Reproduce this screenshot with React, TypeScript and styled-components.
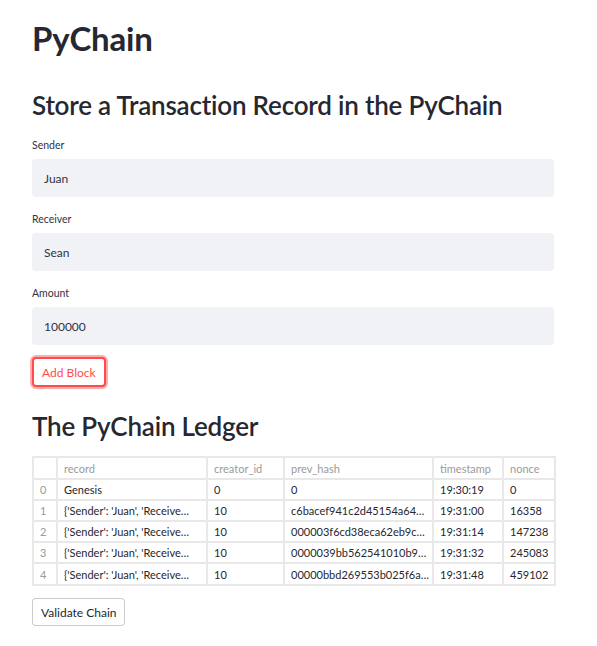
import React from 'react';
import styled, { createGlobalStyle } from 'styled-components';

const GlobalStyle = createGlobalStyle`
  body {
    margin: 0;
    background: #ffffff;
    font-family: Lato, "Liberation Sans", sans-serif;
    color: #262730;
  }
`;

const Page = styled.div`
  width: 522px;
  padding: 18px 0 20px 32px;
`;

const Title = styled.h1`
  margin: 0;
  font-size: 33px;
  line-height: 40px;
  font-weight: 700;
  letter-spacing: -0.2px;
`;

const Heading = styled.h2<{ $top: number }>`
  margin: ${(p) => p.$top}px 0 0;
  font-size: 26px;
  line-height: 32px;
  font-weight: 600;
  letter-spacing: -0.2px;
`;

const Field = styled.div<{ $top: number }>`
  display: flex;
  flex-direction: column;
  gap: 7px;
  margin-top: ${(p) => p.$top}px;
`;

const Label = styled.label`
  font-size: 10.5px;
  line-height: 14px;
  color: #31333f;
`;

const Input = styled.input`
  box-sizing: border-box;
  height: 38px;
  width: 100%;
  border: none;
  border-radius: 4px;
  background: #f0f2f6;
  padding: 0 12px;
  font-family: inherit;
  font-size: 12px;
  color: #31333f;
  outline: none;
`;

const Button = styled.button<{ $active?: boolean; $top: number }>`
  display: block;
  box-sizing: border-box;
  margin-top: ${(p) => p.$top}px;
  height: ${(p) => (p.$active ? 30 : 28)}px;
  padding: 0 8px;
  border-radius: 4px;
  background: #ffffff;
  font-family: inherit;
  font-size: 12px;
  border: ${(p) => (p.$active ? '2px solid #ff4b4b' : '1px solid rgba(49, 51, 63, 0.25)')};
  color: ${(p) => (p.$active ? '#ff4b4b' : '#262730')};
  box-shadow: ${(p) => (p.$active ? '0 0 0 2px rgba(255, 75, 75, 0.45)' : 'none')};
`;

const Table = styled.div`
  margin-top: 14px;
  width: 520px;
  display: grid;
  grid-template-columns: 22px 148px 75px 147px 68px 50px;
  grid-template-rows: 20px repeat(4, 19px) 20px;
  gap: 2px;
  padding: 2px;
  background: #e8e8e8;
`;

const Cell = styled.div<{ $muted?: boolean }>`
  display: flex;
  align-items: center;
  background: #ffffff;
  padding: 0 6px;
  font-size: 11px;
  white-space: nowrap;
  overflow: hidden;
  color: ${(p) => (p.$muted ? '#9a9a9a' : '#262730')};
`;

const columns = ['', 'record', 'creator_id', 'prev_hash', 'timestamp', 'nonce'];

const rows = [
  ['0', 'Genesis', '0', '0', '19:30:19', '0'],
  ['1', "{'Sender': 'Juan', 'Receive…", '10', 'c6bacef941c2d45154a64…', '19:31:00', '16358'],
  ['2', "{'Sender': 'Juan', 'Receive…", '10', '000003f6cd38eca62eb9c…', '19:31:14', '147238'],
  ['3', "{'Sender': 'Juan', 'Receive…", '10', '0000039bb562541010b9…', '19:31:32', '245083'],
  ['4', "{'Sender': 'Juan', 'Receive…", '10', '00000bbd269553b025f6a…', '19:31:48', '459102'],
];

const App: React.FC = () => {
  return (
    <Page>
      <GlobalStyle />
      <Title>PyChain</Title>
      <Heading $top={31}>Store a Transaction Record in the PyChain</Heading>
      <Field $top={17}>
        <Label>Sender</Label>
        <Input defaultValue="Juan" />
      </Field>
      <Field $top={15}>
        <Label>Receiver</Label>
        <Input defaultValue="Sean" />
      </Field>
      <Field $top={15}>
        <Label>Amount</Label>
        <Input defaultValue="100000" />
      </Field>
      <Button $active $top={12}>Add Block</Button>
      <Heading $top={23}>The PyChain Ledger</Heading>
      <Table>
        {columns.map((c, i) => (
          <Cell key={`h${i}`} $muted>{c}</Cell>
        ))}
        {rows.map((r, ri) =>
          r.map((v, ci) => (
            <Cell key={`${ri}-${ci}`} $muted={ci === 0}>
              {v}
            </Cell>
          )),
        )}
      </Table>
      <Button $top={12}>Validate Chain</Button>
    </Page>
  );
};

export default App;
